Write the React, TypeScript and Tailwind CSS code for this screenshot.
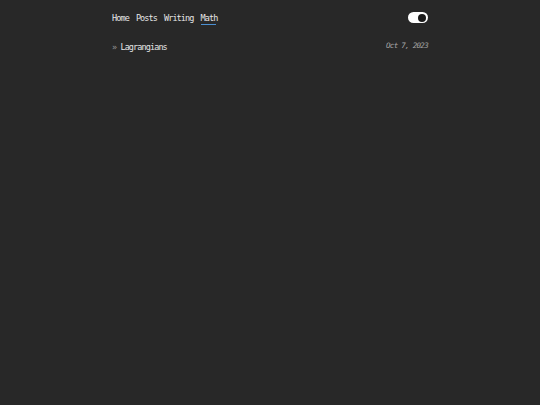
export default function App() {
  const links = ['Home', 'Posts', 'Writing', 'Math'];
  return (
    <div className="min-h-screen bg-[#282828] font-['DejaVu_Sans_Mono',monospace] text-[#e6e6e6] antialiased">
      <div className="mx-auto w-[316px] pt-[12px]">
        <header className="flex h-[11px] items-center justify-between">
          <nav className="flex gap-[7px] pt-[1px] text-[8.5px] leading-[11px] tracking-[-0.9px]">
            {links.map((l) => (
              <a
                key={l}
                href="#"
                className={
                  l === 'Math'
                    ? 'relative after:absolute after:left-0 after:right-[1px] after:top-[11px] after:h-px after:bg-[#4b8fd1]'
                    : ''
                }
              >
                {l}
              </a>
            ))}
          </nav>
          <button className="relative h-[11px] w-[20px] rounded-full bg-white">
            <span className="absolute right-[2px] top-[1.5px] h-[8px] w-[8px] rounded-full bg-[#1a1a1a]" />
          </button>
        </header>
        <ul className="mt-[18px]">
          <li className="flex items-center justify-between">
            <span className="text-[8.5px] leading-[12px] tracking-[-0.9px]">
              <span className="text-[#9a9a9a]">»</span> Lagrangians
            </span>
            <span className="-mt-[2px] text-[7.5px] italic tracking-[-0.7px] text-[#a8a8a8]">Oct 7, 2023</span>
          </li>
        </ul>
      </div>
    </div>
  );
}
